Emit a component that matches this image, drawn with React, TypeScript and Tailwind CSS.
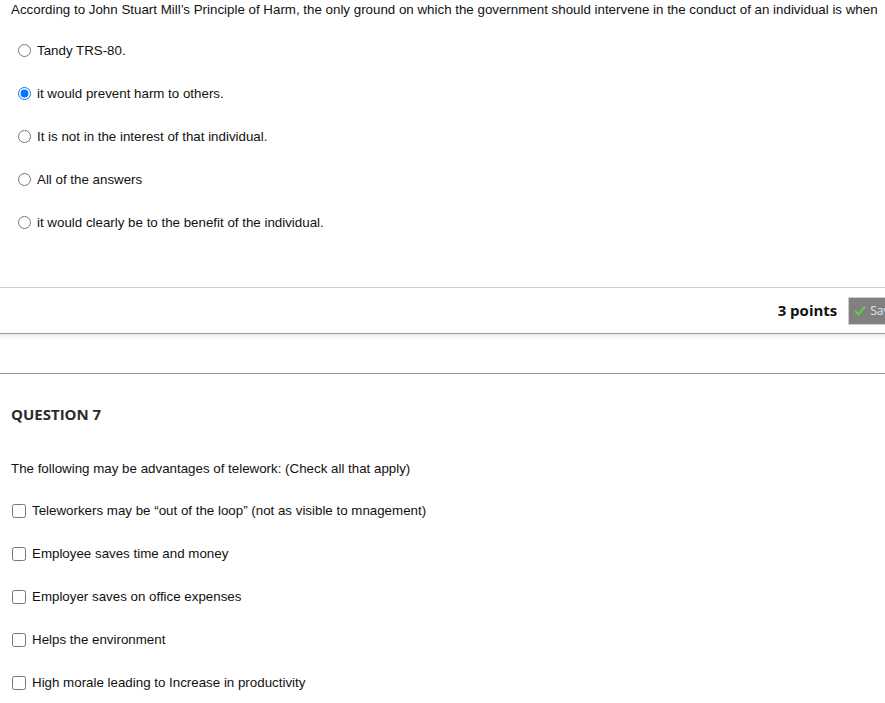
import React from 'react';

const radioOptions = [
  { label: 'Tandy TRS-80.', checked: false },
  { label: 'it would prevent harm to others.', checked: true },
  { label: 'It is not in the interest of that individual.', checked: false },
  { label: 'All of the answers', checked: false },
  { label: 'it would clearly be to the benefit of the individual.', checked: false },
];

const checkOptions = [
  'Teleworkers may be \u201cout of the loop\u201d (not as visible to mnagement)',
  'Employee saves time and money',
  'Employer saves on office expenses',
  'Helps the environment',
  'High morale leading to Increase in productivity',
];

export default function App() {
  return (
    <div className="w-[885px] h-[703px] overflow-hidden bg-white text-[#111] font-['Liberation_Sans',Arial,sans-serif] text-[13.33px]">
      {/* Question 6 body */}
      <p className="pl-[11px] pt-[2px] leading-[15px] whitespace-nowrap">
        According to John Stuart Mill&rsquo;s Principle of Harm, the only ground on which the government should intervene in the conduct of an individual is when
      </p>

      <div className="mt-[12px] flex flex-col">
        {radioOptions.map((o) => (
          <label key={o.label} className="h-[43px] flex items-center pl-[18px] gap-[6px]">
            <input
              type="radio"
              name="q6"
              defaultChecked={o.checked}
              className="m-0 w-[13px] h-[13px]"
            />
            <span className="leading-[15px]">{o.label}</span>
          </label>
        ))}
      </div>

      {/* Points bar */}
      <div className="mt-[43px] h-[47px] border-t border-[#cfcfcf] border-b border-b-[#9a9a9a] flex items-center justify-end overflow-hidden">
        <span className="font-['Open_Sans',sans-serif] font-bold text-[15px] leading-[18px] text-[#111] mr-[11px] -mt-[2px]">3 points</span>
        <button className="shrink-0 h-[28px] mr-[-63px] flex items-center gap-[4px] pl-[5px] pr-[6px] bg-[#808080] border border-[#cfcfcf] text-[#e6e6e6] font-['Open_Sans',sans-serif] text-[12px] whitespace-nowrap">
          <svg className="shrink-0" width="12" height="11" viewBox="0 0 12 11">
            <path d="M1 6 L4.5 9.5 L11 1.5" fill="none" stroke="#5fd13a" strokeWidth="2" />
          </svg>
          Save Answer
        </button>
      </div>
      <div className="h-[6px] bg-gradient-to-b from-[#ececec] to-white" />

      {/* Question 7 */}
      <div className="mt-[33px] border-t border-[#9a9a9a]">
        <h2 className="pl-[11px] pt-[30px] font-['Open_Sans',sans-serif] font-bold text-[15px] leading-[20px] text-[#2b2b2b]">
          QUESTION 7
        </h2>
        <p className="pl-[11px] mt-[37px] leading-[15px]">
          The following may be advantages of telework: (Check all that apply)
        </p>
        <div className="mt-[13px] flex flex-col">
          {checkOptions.map((label) => (
            <label key={label} className="h-[43px] flex items-center pl-[12px] gap-[6px]">
              <input type="checkbox" className="m-0 w-[14px] h-[14px] accent-[#767676]" />
              <span className="leading-[15px]">{label}</span>
            </label>
          ))}
        </div>
      </div>
    </div>
  );
}
